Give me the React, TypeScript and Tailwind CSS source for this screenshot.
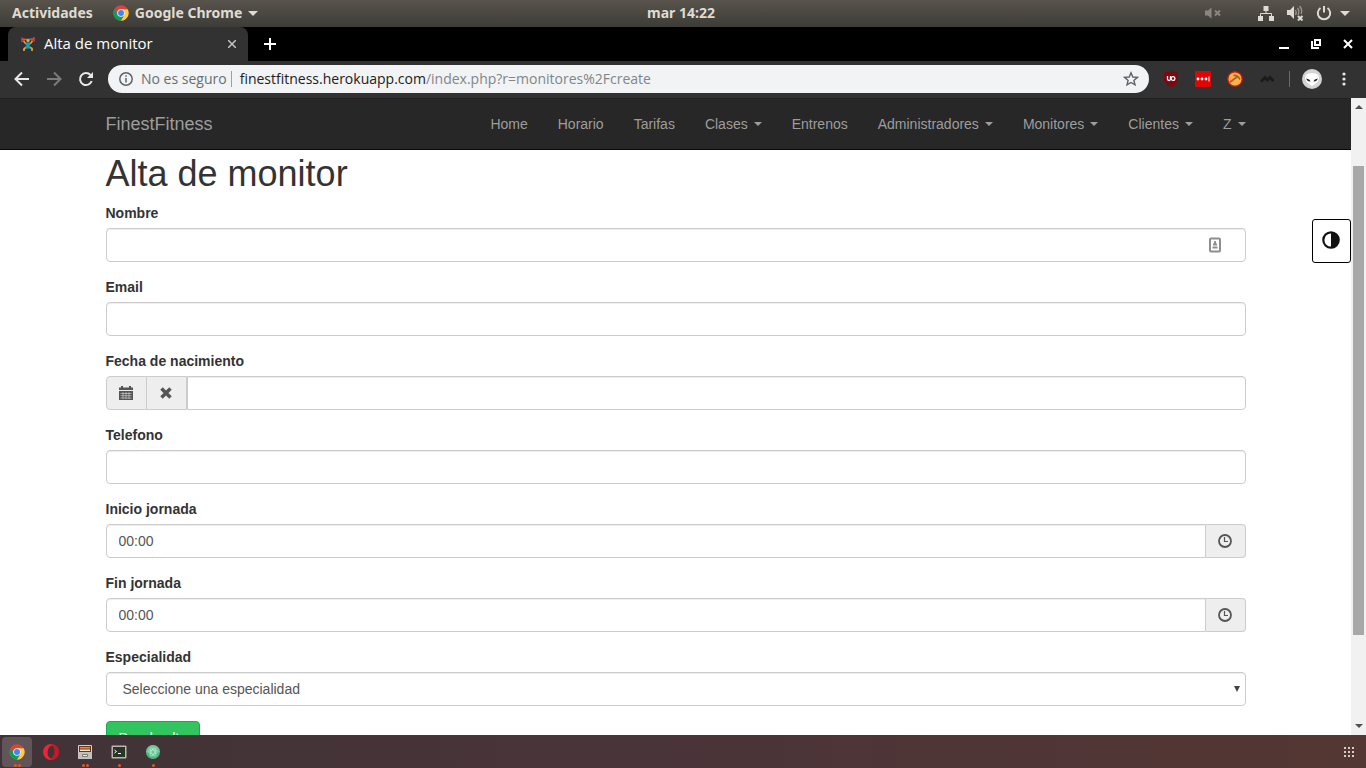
import { useId } from "react";
import type { ReactNode } from "react";

function ChromeLogo({ className }: { className: string }) {
  return (
    <svg viewBox="0 0 48 48" className={className} aria-hidden="true">
      <circle cx="24" cy="24" r="23" fill="#db4437" />
      <path d="M4.1 12.5A23 23 0 0 0 24 47L34 29.8 24 35.5 14 29.8Z" fill="#0f9d58" />
      <path d="M24 47A23 23 0 0 0 43.9 12.5H24L34 29.8Z" fill="#ffcd40" />
      <circle cx="24" cy="24" r="11.5" fill="#f1f1f1" />
      <circle cx="24" cy="24" r="9" fill="#4285f4" />
    </svg>
  );
}

function Triangle({ className }: { className: string }) {
  return (
    <svg viewBox="0 0 10 5" className={className} fill="currentColor" aria-hidden="true">
      <path d="M0 0H10L5 5Z" />
    </svg>
  );
}

function SystemBar() {
  return (
    <header className="flex h-[27px] shrink-0 items-center justify-between bg-linear-to-b from-[#58544c] to-[#3d3c37] pb-px font-['Noto_Sans','Open_Sans',sans-serif] text-sm font-bold text-[#dfdbd2]">
      <div className="flex flex-1 items-center gap-5 pl-3">
        <button type="button">Actividades</button>
        <button type="button" className="flex items-center gap-1.5">
          <ChromeLogo className="size-4" />
          Google Chrome
          <Triangle className="h-[5px] w-2.5" />
        </button>
      </div>
      <button type="button">mar 14:22</button>
      <div className="flex flex-1 items-center justify-end gap-3 pr-4">
        <svg viewBox="0 0 18 16" className="mr-6 h-4 w-[18px] text-[#8b877f]" fill="currentColor" aria-hidden="true">
          <path d="M1 5.500H4L7.500 2.500V13.500L4 10.500H1Z" />
          <path d="M11 5.500 16 10.500M16 5.500 11 10.500" stroke="currentColor" strokeWidth="2" />
        </svg>
        <svg viewBox="0 0 16 16" className="size-4" fill="currentColor" aria-hidden="true">
          <path d="M5.500 1H10.500V6H5.500ZM0 11H5V16H0ZM11 11H16V16H11Z" />
          <path d="M8 6V8.500M2.500 11V8.500H13.500V11" fill="none" stroke="currentColor" />
        </svg>
        <svg viewBox="0 0 18 16" className="h-4 w-[18px]" fill="currentColor" aria-hidden="true">
          <path d="M1 5H4L8 1V14L4 10H1Z" />
          <path d="M9.500 5Q11 7.500 9.500 10M11.500 3Q14 6 12 10M13.500 1Q17 5 15 9" fill="none" stroke="#9a968d" strokeWidth="1.300" />
          <path d="M12 11 16.500 15.500M16.500 11 12 15.500" stroke="currentColor" strokeWidth="2" />
        </svg>
        <div className="flex items-center gap-2">
          <svg viewBox="0 0 16 16" className="size-4" fill="none" stroke="currentColor" strokeWidth="2" aria-hidden="true">
            <path d="M4.500 3A6.200 6.200 0 1 0 11.500 3M8 1V7.500" />
          </svg>
          <Triangle className="h-[5px] w-2.5" />
        </div>
      </div>
    </header>
  );
}

function TabStrip() {
  return (
    <div className="flex h-[34px] shrink-0 items-center bg-black pl-2 font-['Open_Sans','Noto_Sans',sans-serif] text-white">
      <div className="flex h-full w-60 items-center rounded-t-lg bg-[#323232] pr-3 pl-3">
        <svg viewBox="0 0 16 16" className="size-4" fill="none" aria-hidden="true">
          <path d="M2 3.500 14 3" stroke="#8b8f91" />
          <path d="M2 1.500V6M4 2V5M12 2V5M14 1V5.500" stroke="#e8402a" strokeWidth="1.400" />
          <path d="M3.500 5 6 8M12.500 5 10 8" stroke="#e5a248" strokeWidth="1.500" />
          <path d="M6.500 11 4 13V15M9.500 11 12 12.500V15" stroke="#e5a248" strokeWidth="1.700" />
          <circle cx="8" cy="4.500" r="1.600" fill="#edaa52" />
          <path d="M5.500 6.500H10.500L9.500 10 11 12.500H5L6.300 10Z" fill="#16a2a5" />
        </svg>
        <span className="ml-2 flex-1 pb-0.5 text-[15px]">Alta de monitor</span>
        <button type="button" aria-label="Cerrar pestaña">
          <svg viewBox="0 0 8 8" className="size-2 text-[#c4c4c4]" stroke="currentColor" strokeWidth="1.500" aria-hidden="true">
            <path d="M0 0 8 8M8 0 0 8" />
          </svg>
        </button>
      </div>
      <button type="button" aria-label="Nueva pestaña" className="ml-4">
        <svg viewBox="0 0 12 12" className="size-3" stroke="white" strokeWidth="2" aria-hidden="true">
          <path d="M6 0V12M0 6H12" />
        </svg>
      </button>
      <div className="ml-auto flex items-center gap-[22px] pr-[13px]">
        <button type="button" aria-label="Minimizar">
          <svg viewBox="0 0 10 10" className="size-2.5" fill="white" aria-hidden="true"><path d="M0 8H10V10H0Z" /></svg>
        </button>
        <button type="button" aria-label="Restaurar">
          <svg viewBox="0 0 10 10" className="size-2.5" fill="none" stroke="white" strokeWidth="2" aria-hidden="true">
            <path d="M4 1H9V6H4ZM1 2V9H8" />
          </svg>
        </button>
        <button type="button" aria-label="Cerrar">
          <svg viewBox="0 0 10 10" className="size-2.5" stroke="white" strokeWidth="2" aria-hidden="true"><path d="M1 1 9 9M9 1 1 9" /></svg>
        </button>
      </div>
    </div>
  );
}

function Toolbar() {
  return (
    <div className="flex h-[37px] shrink-0 items-center bg-[#323232] pb-px font-['Open_Sans','Noto_Sans',sans-serif] text-sm">
      <div className="flex items-center gap-4 px-3.5 text-[#e8e8e8]">
        <button type="button" aria-label="Atrás">
          <svg viewBox="0 0 16 16" className="size-4" fill="none" stroke="currentColor" strokeWidth="2" aria-hidden="true"><path d="M15 8H2M8 1.500 1.500 8 8 14.500" /></svg>
        </button>
        <button type="button" aria-label="Adelante" className="text-[#7c7c7c]">
          <svg viewBox="0 0 16 16" className="size-4" fill="none" stroke="currentColor" strokeWidth="2" aria-hidden="true"><path d="M1 8H14M8 1.500 14.500 8 8 14.500" /></svg>
        </button>
        <button type="button" aria-label="Recargar">
          <svg viewBox="0 0 16 16" className="size-4" fill="none" stroke="currentColor" strokeWidth="2" aria-hidden="true">
            <path d="M13.700 10A6 6 0 1 1 12.500 4" />
            <path d="M15 1V7H9Z" fill="currentColor" stroke="none" />
          </svg>
        </button>
      </div>
      <div className="flex h-7 flex-1 items-center rounded-full bg-[#f1f3f4] pr-2.5 pl-[11px] text-[#80868b]">
        <svg viewBox="0 0 14 14" className="size-3.5" fill="none" stroke="#5f6368" strokeWidth="1.500" aria-hidden="true">
          <circle cx="7" cy="7" r="6.200" /><path d="M7 6V10.500M7 3.300V4.800" />
        </svg>
        <span className="ml-2 text-[#6a6e73]">No es seguro</span>
        <span className="mr-2 ml-1 h-4 w-px bg-[#9aa0a6]" />
        <span className="flex-1"><span className="text-[#202124]">finestfitness.herokuapp.com</span>/index.php?r=monitores%2Fcreate</span>
        <button type="button" aria-label="Añadir a marcadores">
          <svg viewBox="0 0 16 16" className="size-4" fill="none" stroke="#5f6368" strokeWidth="1.400" aria-hidden="true">
            <path d="M8 1.800 9.800 6 14.400 6.400 10.900 9.400 12 13.900 8 11.500 4 13.900 5.100 9.400 1.600 6.400 6.200 6Z" />
          </svg>
        </button>
      </div>
      <div className="flex items-center gap-4 pr-5 pl-3.5">
        <svg viewBox="0 0 16 16" className="size-4" aria-hidden="true">
          <path d="M8 0Q11 1.500 15 1.500V8Q15 13 8 16 1 13 1 8V1.500Q5 1.500 8 0Z" fill="#800610" />
          <path d="M4.500 5V8Q4.500 9.500 6 9.500T7.500 8V5" fill="none" stroke="white" strokeWidth="1.300" />
          <circle cx="10" cy="7.500" r="1.900" fill="none" stroke="white" strokeWidth="1.300" />
        </svg>
        <svg viewBox="0 0 16 16" className="size-4" fill="white" aria-hidden="true">
          <rect width="16" height="16" rx="1" fill="#e00505" />
          <circle cx="3" cy="8" r="1.400" /><circle cx="7" cy="8" r="1.400" /><circle cx="11" cy="8" r="1.400" /><path d="M13.500 5.500H14.500V10.500H13.500Z" />
        </svg>
        <svg viewBox="0 0 16 16" className="size-4" fill="none" aria-hidden="true">
          <circle cx="8" cy="8" r="7.200" fill="#ffb04c" stroke="#d5180c" strokeWidth="1.300" />
          <path d="M2.500 11.500 10.500 5.500M6.500 4.500Q10.500 3.500 13 8.500" stroke="#a46824" strokeWidth="1.700" />
        </svg>
        <svg viewBox="0 0 16 16" className="size-4" fill="#1b1b1b" aria-hidden="true">
          <path d="M1 10 6 4.500 8.300 7 11 4.500 15.500 9 13.500 11 11 8.500 8.300 11 6 8.500 3 11.500Z" />
        </svg>
        <span className="-mx-0.5 h-4 w-px bg-[#696969]" />
        <svg viewBox="0 0 20 20" className="-mx-0.5 size-5" aria-hidden="true">
          <circle cx="10" cy="10" r="10" fill="#d4d4d4" />
          <path d="M3 8Q4 4 10 4T17 8Q17.500 13 10 17 2.500 13 3 8Z" fill="white" />
          <path d="M4 9.500Q8 10 8.500 12.500 5.500 13 4 9.500ZM16 9.500Q12 10 11.500 12.500 14.500 13 16 9.500Z" fill="#222" />
        </svg>
        <button type="button" aria-label="Menú" className="ml-1.5">
          <svg viewBox="0 0 4 14" className="h-3.5 w-1" fill="#e8e8e8" aria-hidden="true"><circle cx="2" cy="2" r="1.600" /><circle cx="2" cy="7" r="1.600" /><circle cx="2" cy="12" r="1.600" /></svg>
        </button>
      </div>
    </div>
  );
}

const links = [
  { label: "Home", menu: false },
  { label: "Horario", menu: false },
  { label: "Tarifas", menu: false },
  { label: "Clases", menu: true },
  { label: "Entrenos", menu: false },
  { label: "Administradores", menu: true },
  { label: "Monitores", menu: true },
  { label: "Clientes", menu: true },
  { label: "Z", menu: true },
];

function Navbar() {
  return (
    <nav className="border-t border-b border-t-[#222] border-b-[#080808] bg-[#272727] text-[#9d9d9d]">
      <div className="mx-auto flex max-w-[1140px] items-center justify-between">
        <a href="#" className="text-lg leading-5">FinestFitness</a>
        <ul className="flex gap-[30px]">
          {links.map((l) => (
            <li key={l.label}>
              <a href="#" className="flex items-center gap-1.5 py-[15px] text-sm">
                {l.label}
                {l.menu && <Triangle className="h-1 w-2" />}
              </a>
            </li>
          ))}
        </ul>
      </div>
    </nav>
  );
}

const control = "h-[34px] min-w-0 flex-1 border border-[#ccc] bg-white px-3 text-sm text-[#555] shadow-[inset_0_1px_1px_rgba(0,0,0,0.075)]";
const addon = "flex w-10 items-center justify-center bg-[#eee] text-[#555]";

function Field({ label, children }: { label: string; children: (id: string) => ReactNode }) {
  const id = useId();
  return (
    <div className="mb-[15px]">
      <label htmlFor={id} className="mb-[5px] block w-fit text-sm font-bold">{label}</label>
      <div className="relative flex">{children(id)}</div>
    </div>
  );
}

function TimeField({ label }: { label: string }) {
  return (
    <Field label={label}>
      {(id) => (
        <>
          <input id={id} type="text" defaultValue="00:00" className={`${control} rounded-l`} />
          <button type="button" aria-label="Elegir hora" className={`${addon} rounded-r border border-l-0 border-[#ccc]`}>
            <svg viewBox="0 0 14 14" className="size-3.5" fill="none" stroke="currentColor" aria-hidden="true">
              <circle cx="7" cy="7" r="6" strokeWidth="1.800" /><path d="M6.500 3V7.500H10" strokeWidth="1.200" />
            </svg>
          </button>
        </>
      )}
    </Field>
  );
}

function MonitorForm() {
  return (
    <form className="mx-auto max-w-[1140px] pt-1">
      <h1 className="mb-[9px] text-4xl leading-10">Alta de monitor</h1>
      <Field label="Nombre">
        {(id) => (
          <>
            <input id={id} type="text" className={`${control} rounded`} />
            <svg viewBox="0 0 12 16" className="absolute top-[9px] right-[25px] h-4 w-3" fill="none" stroke="#8e8e8e" aria-hidden="true">
              <rect x="1" y="1.500" width="10" height="13" rx="1" strokeWidth="2" />
              <path d="M6 4V6M4 7.500H8M5 6H7M3.500 10.500H8.500" strokeWidth="1.800" />
            </svg>
          </>
        )}
      </Field>
      <Field label="Email">{(id) => <input id={id} type="email" className={`${control} rounded`} />}</Field>
      <Field label="Fecha de nacimiento">
        {(id) => (
          <>
            <button type="button" aria-label="Elegir fecha" className={`${addon} w-[41px] rounded-l border border-[#ccc]`}>
              <svg viewBox="0 0 14 14" className="size-3.5" fill="currentColor" aria-hidden="true">
                <path d="M0 1.500H2V0H4V1.500H10V0H12V1.500H14V4H0ZM0 5H14V14H0Z" />
                <path d="M1.500 7.500H12.500M1.500 9.700H12.500M1.500 12H12.500M4 6V13M7 6V13M10 6V13" stroke="#eee" strokeWidth=".5" />
              </svg>
            </button>
            <button type="button" aria-label="Borrar fecha" className={`${addon} border-y border-r border-[#ccc]`}>
              <svg viewBox="0 0 12 12" className="size-3" stroke="currentColor" strokeWidth="3.500" aria-hidden="true"><path d="M1.500 1.500 10.500 10.500M10.500 1.500 1.500 10.500" /></svg>
            </button>
            <input id={id} type="text" className={`${control} rounded-r`} />
          </>
        )}
      </Field>
      <Field label="Telefono">{(id) => <input id={id} type="tel" className={`${control} rounded`} />}</Field>
      <TimeField label="Inicio jornada" />
      <TimeField label="Fin jornada" />
      <Field label="Especialidad">
        {(id) => (
          <>
            <select id={id} className={`${control} appearance-none rounded pl-4`}>
              <option>Seleccione una especialidad</option>
            </select>
            <svg viewBox="0 0 6 6" className="pointer-events-none absolute top-[14px] right-1.5 size-1.5" fill="#444" aria-hidden="true"><path d="M0 0H6L3 6Z" /></svg>
          </>
        )}
      </Field>
      <button type="submit" className="rounded border border-[#12ad50] bg-[#31c45f] px-3 py-1.5 text-sm text-white">Dar de alta</button>
    </form>
  );
}

function Scrollbar() {
  return (
    <div className="flex w-[15px] shrink-0 flex-col items-center bg-[#f1f1f1] py-[7px] text-[#505050]" aria-hidden="true">
      <Triangle className="h-1 w-2 rotate-180" />
      <div className="flex w-full flex-1 flex-col items-center pt-[57px] pb-[89px]">
        <div className="w-[11px] flex-1 bg-[#a8a8a8]" />
      </div>
      <Triangle className="h-1 w-2" />
    </div>
  );
}

function DockItem({ label, windows, active, children }: { label: string; windows: number; active?: boolean; children: ReactNode }) {
  return (
    <button type="button" aria-label={label} className={`relative flex h-[30px] w-[30px] items-center justify-center rounded ${active ? "bg-[#62555a]" : ""}`}>
      {children}
      <span className="absolute bottom-0 flex gap-px">
        {Array.from({ length: windows }, (_, i) => <span key={i} className="size-[3px] rounded-full bg-[#e95420]" />)}
      </span>
    </button>
  );
}

function Dock() {
  return (
    <footer className="flex h-[33px] shrink-0 items-center gap-1 bg-linear-to-r from-[#403337] via-[#4a3439] to-[#543732] pr-3 pl-0.5">
      <DockItem label="Google Chrome" windows={2} active><ChromeLogo className="size-4" /></DockItem>
      <DockItem label="Opera" windows={0}>
        <svg viewBox="0 0 16 16" className="size-4" aria-hidden="true">
          <path fillRule="evenodd" d="M8 0A8 8 0 1 0 8 16 8 8 0 1 0 8 0ZM8.500 2C11 2 12 5 11.500 8.500S9.500 14 7.500 14 4.300 11 4.700 7.500 6.500 2 8.500 2Z" fill="#f02336" />
          <path d="M8.500 2C11 2 12 5 11.500 8.500S9.500 14 7.500 14L8 16A8 8 0 0 0 8 0Z" fill="#a51320" opacity=".6" />
        </svg>
      </DockItem>
      <DockItem label="Archivos" windows={2}>
        <svg viewBox="0 0 16 16" className="size-4" aria-hidden="true">
          <rect x="1" y="1" width="14" height="14" rx="1" fill="#d5d1ca" />
          <path d="M2 2H14V8H2Z" fill="#693519" /><path d="M3 3H13V4.500H3Z" fill="#f58a37" /><path d="M3 5.500H13V7H3Z" fill="#ffe8d0" />
          <path d="M1 8H15V15H1Z" fill="#c4c1bc" /><path d="M5.500 10.500H10.500V12.500H5.500Z" fill="#eee" stroke="#777" />
        </svg>
      </DockItem>
      <DockItem label="Terminal" windows={1}>
        <svg viewBox="0 0 16 16" className="size-4" aria-hidden="true">
          <rect x=".5" y="1.500" width="15" height="13" rx="1" fill="#b9b8ae" />
          <rect x="2" y="3" width="12" height="10" fill="#28362a" />
          <path d="M3.500 6 5.500 7.500 3.500 9M7 9.500H10" fill="none" stroke="white" />
        </svg>
      </DockItem>
      <DockItem label="Atom" windows={1}>
        <svg viewBox="0 0 16 16" className="size-4" fill="none" aria-hidden="true">
          <circle cx="8" cy="8" r="7" fill="#4fb985" />
          <path d="M1 8A7 7 0 0 1 15 8Q8 10 1 8Z" fill="#88cfa9" opacity=".6" />
          <g stroke="#b9e5cd" strokeWidth=".7"><ellipse cx="8" cy="8" rx="4.500" ry="2" /><ellipse cx="8" cy="8" rx="4.500" ry="2" transform="rotate(60 8 8)" /><ellipse cx="8" cy="8" rx="4.500" ry="2" transform="rotate(120 8 8)" /></g>
        </svg>
      </DockItem>
      <button type="button" aria-label="Mostrar aplicaciones" className="ml-auto grid grid-cols-3 gap-0.5">
        {Array.from({ length: 9 }, (_, i) => <span key={i} className="size-0.5 bg-[#d5cfc3]" />)}
      </button>
    </footer>
  );
}

export default function App() {
  return (
    <div className="flex h-screen flex-col overflow-hidden">
      <SystemBar />
      <TabStrip />
      <Toolbar />
      <div className="flex min-h-0 flex-1 bg-white font-['Liberation_Sans',Arial,sans-serif] text-[#333]">
        <main className="relative min-w-0 flex-1 overflow-hidden">
          <Navbar />
          <MonitorForm />
          <button type="button" aria-label="Cambiar contraste" className="absolute top-[121px] right-0 flex h-11 w-[39px] items-center justify-center rounded-[3px] border border-black bg-white pr-px pb-0.5">
            <svg viewBox="0 0 18 18" className="size-[18px]" aria-hidden="true">
              <circle cx="9" cy="9" r="7.700" fill="none" stroke="#111" strokeWidth="2.200" /><path d="M9 1A8 8 0 0 1 9 17Z" fill="#111" />
            </svg>
          </button>
        </main>
        <Scrollbar />
      </div>
      <Dock />
    </div>
  );
}
